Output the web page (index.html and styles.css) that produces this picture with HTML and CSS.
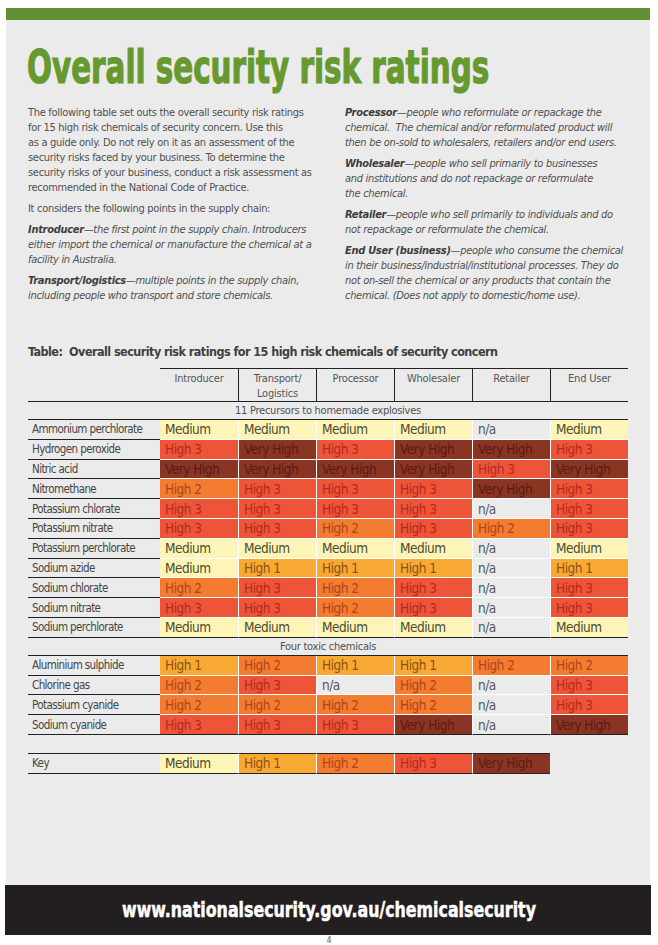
FILE: index.html
```html
<!DOCTYPE html>
<html lang="en">
<head>
<meta charset="utf-8">
<title>Overall security risk ratings</title>
<link rel="stylesheet" href="styles.css">
</head>
<body>
<div class="page">
  <div class="sheet">
    <div class="topbar"></div>
    <h1 class="title"><span class="squeeze">Overall security risk ratings</span></h1>
    <div class="intro">
      <div class="col">
        <p>The following table set outs the overall security risk ratings<br>for 15 high risk chemicals of security concern. Use this<br>as a guide only. Do not rely on it as an assessment of the<br>security risks faced by your business. To determine the<br>security risks of your business, conduct a risk assessment as<br>recommended in the National Code of Practice.</p>
        <p>It considers the following points in the supply chain:</p>
        <p class="def"><b>Introducer</b>—the first point in the supply chain. Introducers<br>either import the chemical or manufacture the chemical at a<br>facility in Australia.</p>
        <p class="def"><b>Transport/logistics</b>—multiple points in the supply chain,<br>including people who transport and store chemicals.</p>
      </div>
      <div class="col">
        <p class="def"><b>Processor</b>—people who reformulate or repackage the<br>chemical.&nbsp; The chemical and/or reformulated product will<br>then be on-sold to wholesalers, retailers and/or end users.</p>
        <p class="def"><b>Wholesaler</b>—people who sell primarily to businesses<br>and institutions and do not repackage or reformulate<br>the chemical.</p>
        <p class="def"><b>Retailer</b>—people who sell primarily to individuals and do<br>not repackage or reformulate the chemical.</p>
        <p class="def"><b>End User (business)</b>—people who consume the chemical<br>in their business/industrial/institutional processes. They do<br>not on-sell the chemical or any products that contain the<br>chemical. (Does not apply to domestic/home use).</p>
      </div>
    </div>

    <h2 class="table-title">Table:&nbsp; Overall security risk ratings for 15 high risk chemicals of security concern</h2>

    <table class="risk">
      <colgroup><col class="c-name"><col><col><col><col><col><col></colgroup>
      <thead>
        <tr class="head">
          <th class="blank"></th>
          <th>Introducer</th>
          <th class="sep">Transport/<br>Logistics</th>
          <th class="sep">Processor</th>
          <th class="sep">Wholesaler</th>
          <th class="sep">Retailer</th>
          <th class="sep">End User</th>
        </tr>
      </thead>
      <tbody>
        <tr class="group"><td colspan="7">11 Precursors to homemade explosives</td></tr>
        <tr><td class="name">Ammonium perchlorate</td><td class="m">Medium</td><td class="m">Medium</td><td class="m">Medium</td><td class="m">Medium</td><td class="na">n/a</td><td class="m">Medium</td></tr>
        <tr><td class="name">Hydrogen peroxide</td><td class="h3">High 3</td><td class="vh">Very High</td><td class="h3">High 3</td><td class="vh">Very High</td><td class="vh">Very High</td><td class="h3">High 3</td></tr>
        <tr><td class="name">Nitric acid</td><td class="vh">Very High</td><td class="vh">Very High</td><td class="vh">Very High</td><td class="vh">Very High</td><td class="h3">High 3</td><td class="vh">Very High</td></tr>
        <tr><td class="name">Nitromethane</td><td class="h2">High 2</td><td class="h3">High 3</td><td class="h3">High 3</td><td class="h3">High 3</td><td class="vh">Very High</td><td class="h3">High 3</td></tr>
        <tr><td class="name">Potassium chlorate</td><td class="h3">High 3</td><td class="h3">High 3</td><td class="h3">High 3</td><td class="h3">High 3</td><td class="na">n/a</td><td class="h3">High 3</td></tr>
        <tr><td class="name">Potassium nitrate</td><td class="h3">High 3</td><td class="h3">High 3</td><td class="h2">High 2</td><td class="h3">High 3</td><td class="h2">High 2</td><td class="h3">High 3</td></tr>
        <tr><td class="name">Potassium perchlorate</td><td class="m">Medium</td><td class="m">Medium</td><td class="m">Medium</td><td class="m">Medium</td><td class="na">n/a</td><td class="m">Medium</td></tr>
        <tr><td class="name">Sodium azide</td><td class="m">Medium</td><td class="h1">High 1</td><td class="h1">High 1</td><td class="h1">High 1</td><td class="na">n/a</td><td class="h1">High 1</td></tr>
        <tr><td class="name">Sodium chlorate</td><td class="h2">High 2</td><td class="h3">High 3</td><td class="h2">High 2</td><td class="h3">High 3</td><td class="na">n/a</td><td class="h3">High 3</td></tr>
        <tr><td class="name">Sodium nitrate</td><td class="h3">High 3</td><td class="h3">High 3</td><td class="h2">High 2</td><td class="h3">High 3</td><td class="na">n/a</td><td class="h3">High 3</td></tr>
        <tr class="last"><td class="name">Sodium perchlorate</td><td class="m">Medium</td><td class="m">Medium</td><td class="m">Medium</td><td class="m">Medium</td><td class="na">n/a</td><td class="m">Medium</td></tr>
        <tr class="group"><td colspan="7">Four toxic chemicals</td></tr>
        <tr><td class="name">Aluminium sulphide</td><td class="h1">High 1</td><td class="h2">High 2</td><td class="h1">High 1</td><td class="h1">High 1</td><td class="h2">High 2</td><td class="h2">High 2</td></tr>
        <tr><td class="name">Chlorine gas</td><td class="h2">High 2</td><td class="h3">High 3</td><td class="na">n/a</td><td class="h2">High 2</td><td class="na">n/a</td><td class="h3">High 3</td></tr>
        <tr><td class="name">Potassium cyanide</td><td class="h2">High 2</td><td class="h2">High 2</td><td class="h2">High 2</td><td class="h2">High 2</td><td class="na">n/a</td><td class="h3">High 3</td></tr>
        <tr class="last"><td class="name">Sodium cyanide</td><td class="h3">High 3</td><td class="h3">High 3</td><td class="h3">High 3</td><td class="vh">Very High</td><td class="na">n/a</td><td class="vh">Very High</td></tr>
      </tbody>
    </table>

    <table class="key">
      <colgroup><col class="c-name"><col><col><col><col><col></colgroup>
      <tbody>
        <tr><td class="name">Key</td><td class="m">Medium</td><td class="h1">High 1</td><td class="h2">High 2</td><td class="h3">High 3</td><td class="vh">Very High</td></tr>
      </tbody>
    </table>
  </div>
  <footer class="footer"><span class="squeeze">www.nationalsecurity.gov.au/chemicalsecurity</span></footer>
  <div class="pagenum">4</div>
</div>
</body>
</html>
```
FILE: styles.css
```css
* { box-sizing: border-box; }

html, body {
  margin: 0;
  padding: 0;
  background: #ffffff;
}

body {
  font-family: "DejaVu Sans Condensed", "Liberation Sans Narrow", "Roboto", sans-serif;
  color: #4f4f4f;
}

.page {
  width: 658px;
  height: 945px;
  padding-top: 8px;
}

.sheet {
  margin-left: 6px;
  width: 644px;
  height: 877px;
  background: #ebebeb;
  padding-left: 22px;
}

.topbar {
  height: 12px;
  background: #5f8f2e;
  margin-left: -22px;
}

.title {
  margin: 24px 0 0 -1px;
  font-size: 46px;
  line-height: 46px;
  font-weight: bold;
  color: #67992f;
  white-space: nowrap;
}

.squeeze {
  display: inline-block;
  transform-origin: left center;
}

.title .squeeze {
  transform: scaleX(0.71);
  -webkit-text-stroke: 1.2px #67992f;
}

.intro {
  margin-top: 15px;
  display: grid;
  grid-template-columns: 317px 290px;
}

.intro p {
  margin: 0 0 6px 0;
  font-size: 11px;
  line-height: 15px;
  letter-spacing: -0.3px;
  color: #505050;
  white-space: nowrap;
}

.intro .def {
  font-style: italic;
}

.intro .def b {
  color: #3d3d3d;
}

.table-title {
  margin: 35px 0 0 0;
  font-size: 12.5px;
  line-height: 16px;
  letter-spacing: -0.55px;
  font-weight: bold;
  color: #3f3f3f;
  white-space: nowrap;
}

table {
  border-collapse: separate;
  border-spacing: 0;
  table-layout: fixed;
}

.risk {
  width: 600px;
  margin-top: 8px;
}

.key {
  width: 522px;
  margin-top: 18px;
}

col.c-name { width: 132px; }

.head th {
  height: 34px;
  padding: 2px 2px 0;
  vertical-align: top;
  font-weight: normal;
  font-size: 11px;
  line-height: 15px;
  letter-spacing: -0.2px;
  color: #555;
  text-align: center;
  border-top: 1px solid #222;
  border-bottom: 1px solid #222;
}

.head th.blank {
  border-top: 0;
  height: 33px;
}

.head th.sep { border-left: 1px solid #222; }

.group td {
  height: 18px;
  padding: 0;
  text-align: center;
  font-size: 11px;
  line-height: 17px;
  letter-spacing: -0.25px;
  color: #4f4f4f;
  border-bottom: 1px solid #222;
}

tbody td {
  height: 19.8px;
  padding: 0 0 0 5px;
  font-size: 13.5px;
  line-height: 18px;
  letter-spacing: -0.5px;
  white-space: nowrap;
  overflow: hidden;
  border-bottom: 1px solid #fff;
}

tbody td + td + td { border-left: 1px solid #fff; }

tbody td.name {
  padding-left: 4px;
  font-size: 11.5px;
  letter-spacing: -0.6px;
  color: #454545;
  border-bottom: 1px solid #222;
}

.risk tr.last td { border-bottom: 1px solid #222; }

.key td {
  border-top: 1px solid #222;
  border-bottom: 1px solid #222;
  height: 21px;
}

.m  { background: #fdf4b8; color: #4f4c2c; }
.h1 { background: #f8a933; color: #8d5312; }
.h2 { background: #f37c31; color: #b0441a; }
.h3 { background: #ee5438; color: #b22b22; }
.vh { background: #8a3424; color: #5a1b13; }
.na { background: #ebebeb; color: #555555; }

.footer {
  margin-left: 5px;
  width: 646px;
  height: 50px;
  background: #231f20;
  color: #ffffff;
  font-size: 22px;
  line-height: 50px;
  font-weight: bold;
  padding-left: 117px;
  white-space: nowrap;
}

.footer .squeeze {
  transform: scaleX(0.8);
  -webkit-text-stroke: 0.5px #ffffff;
}

.pagenum {
  text-align: center;
  font-size: 8px;
  line-height: 12px;
  color: #555;
}
```
